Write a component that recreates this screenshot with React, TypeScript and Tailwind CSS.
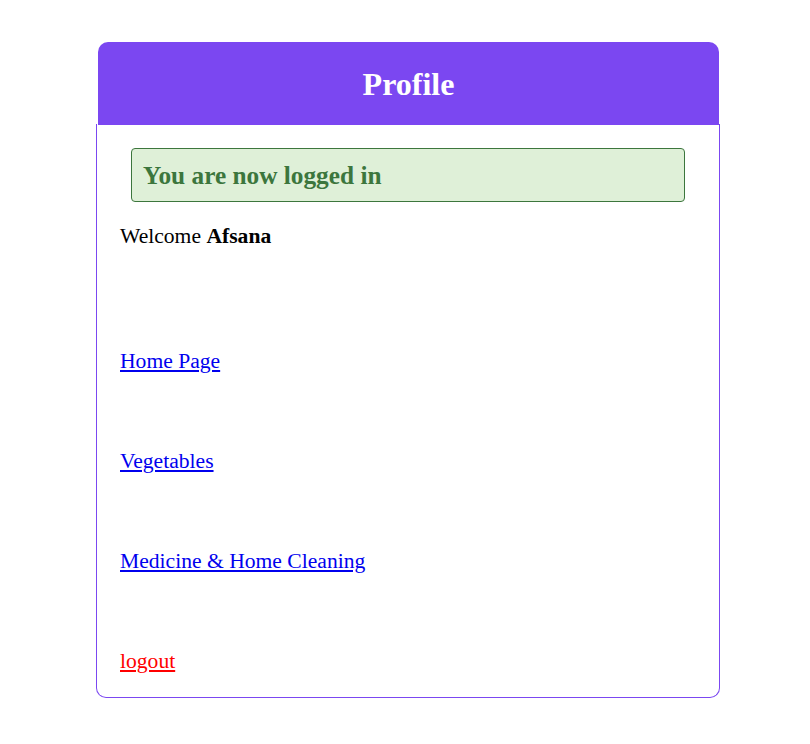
export default function App() {
  const serif = { fontFamily: '"Liberation Serif", "Times New Roman", serif' }
  return (
    <div className="min-h-screen bg-white" style={serif}>
      <div className="ml-[96px] w-[624px] pt-[42px]">
        <div className="ml-[2px] mr-px flex h-[83px] items-center justify-center rounded-t-[10px] bg-[#7b47f1]">
          <h1 className="text-[32px] font-bold leading-none text-white">Profile</h1>
        </div>
        <div className="-mt-px rounded-b-[10px] border border-t-0 border-[#7b47f1] px-[23px] pt-[24px] pb-[24px] text-[21.6px] leading-[23px] text-black">
          <div className="mx-[11px] flex h-[54px] items-center rounded-[4px] border border-[#3c763d] bg-[#dff0d8] px-[11px]">
            <h3 className="text-[25.3px] font-bold text-[#3c763d]">You are now logged in</h3>
          </div>
          <p className="mt-[23px]">
            Welcome <b>Afsana</b>
          </p>
          <div className="mt-[102px] flex flex-col gap-[77px]">
            <a href="#" className="w-fit text-[#0000ee] underline">Home Page</a>
            <a href="#" className="w-fit text-[#0000ee] underline">Vegetables</a>
            <a href="#" className="w-fit text-[#0000ee] underline">Medicine &amp; Home Cleaning</a>
            <a href="#" className="w-fit text-[#ff0000] underline">logout</a>
          </div>
        </div>
      </div>
    </div>
  )
}
